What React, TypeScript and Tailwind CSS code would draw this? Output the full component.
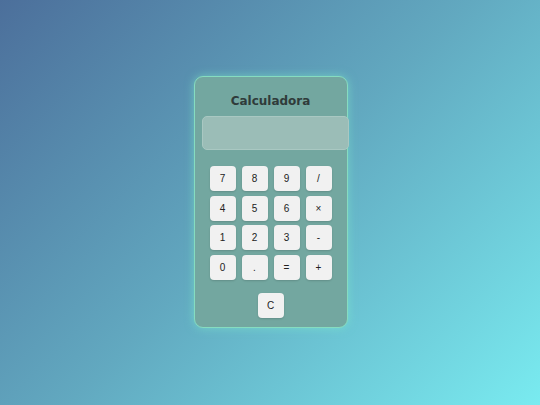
import React from 'react';

const keys = ['7', '8', '9', '/', '4', '5', '6', '×', '1', '2', '3', '-', '0', '.', '=', '+'];

export default function App() {
  return (
    <div className="flex h-[405px] w-[540px] items-start justify-center bg-[linear-gradient(135deg,#4c6f9b_0%,#62a9c0_50%,#79ebf0_100%)] pl-[1px] pt-[76px]">
      {/* Card */}
      <div className="flex h-[252px] w-[154px] flex-col rounded-[9px] border border-[#86dcc0] bg-[#73a7a0] shadow-[0_0_10px_rgba(130,240,200,0.55)]">
        <h1 className="mt-[15px] text-center font-['DejaVu_Sans',sans-serif] text-[12px] font-bold leading-[18px] text-[#2f3b3a]">
          Calculadora
        </h1>

        {/* Display */}
        <div className="ml-[7px] mt-[6px] h-[34px] w-[147px] rounded-[5px] border border-[#a9c8c2] bg-[#9bbdb7]" />

        {/* Keys */}
        <div className="mx-auto mt-[16px] grid grid-cols-[repeat(4,26px)] gap-x-[6px] gap-y-[4.5px]">
          {keys.map((k) => (
            <button
              key={k}
              className="flex h-[25px] w-[26px] items-center justify-center rounded-[4px] bg-[#f1f1f1] font-['Liberation_Sans',sans-serif] text-[10px] text-[#222] shadow-[0_1px_2px_rgba(0,0,0,0.15)]"
            >
              {k}
            </button>
          ))}
        </div>

        <div className="mt-[13px] flex justify-center">
          <button className="flex h-[25px] w-[26px] items-center justify-center rounded-[4px] bg-[#f1f1f1] font-['Liberation_Sans',sans-serif] text-[10px] text-[#222] shadow-[0_1px_2px_rgba(0,0,0,0.15)]">
            C
          </button>
        </div>
      </div>
    </div>
  );
}
